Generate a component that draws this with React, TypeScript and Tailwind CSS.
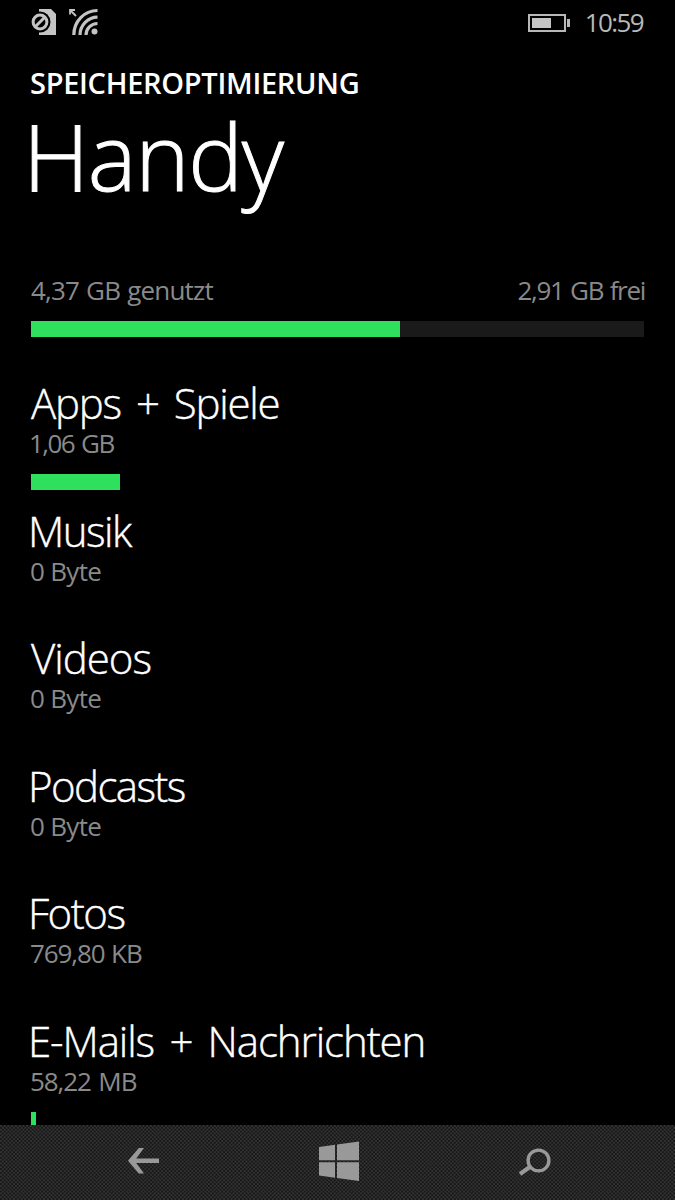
import React from 'react'

const TOTAL_WIDTH = 613

interface StorageItem {
    name: string
    size: string
    bar: number
    nameClass: string
    sizeClass: string
}

const items: StorageItem[] = [
    { name: 'Apps + Spiele', size: '1,06 GB', bar: 89, nameClass: 'tracking-[-1.25px] [word-spacing:5.5px]', sizeClass: '-ml-[2px] tracking-[-1.6px] [word-spacing:2px]' },
    { name: 'Musik', size: '0 Byte', bar: 0, nameClass: '-ml-[3px] tracking-[-1.5px]', sizeClass: '-ml-px tracking-[-0.7px]' },
    { name: 'Videos', size: '0 Byte', bar: 0, nameClass: 'tracking-[-1px]', sizeClass: '-ml-px tracking-[-0.7px]' },
    { name: 'Podcasts', size: '0 Byte', bar: 0, nameClass: '-ml-[3px] tracking-[-1.6px]', sizeClass: '-ml-px tracking-[-0.7px]' },
    { name: 'Fotos', size: '769,80 KB', bar: 0, nameClass: '-ml-[3px] tracking-[-1.5px]', sizeClass: '-ml-px tracking-[-1.1px] [word-spacing:1px]' },
    { name: 'E-Mails + Nachrichten', size: '58,22 MB', bar: 5, nameClass: '-ml-[3px] tracking-[-1.1px] [word-spacing:5.5px]', sizeClass: '-ml-px tracking-[-1.1px] [word-spacing:2px]' },
]

function StatusBar() {
    return (
        <div className="flex h-[46px] items-start justify-between pl-[31px] pr-[32px] text-[#b8b8b8]">
            <div className="flex gap-[12px] pt-[8px]">
                <svg width="26" height="28" viewBox="0 0 26 28">
                    <path d="M8 1h12l5 5v21H8z" fill="#c4c4c4" />
                    <circle cx="9" cy="14" r="10.5" fill="#000" />
                    <circle cx="9" cy="14" r="6.9" fill="none" stroke="#c4c4c4" strokeWidth="3" />
                    <path d="M4.5 18.5l9-9" stroke="#c4c4c4" strokeWidth="3" />
                </svg>
                <svg width="30" height="28" viewBox="0 0 30 28" fill="none" stroke="#c4c4c4">
                    <circle cx="25.5" cy="23.5" r="3" fill="#c4c4c4" stroke="none" />
                    <path d="M4.8 27A23.5 24.5 0 0 1 28.5 2.5" strokeWidth="3.2" />
                    <path d="M11 27A17.5 18 0 0 1 28.5 9.2" strokeWidth="3.2" />
                    <path d="M17 27A11.5 11.5 0 0 1 28.5 15.5" strokeWidth="3.2" />
                    <path d="M1 6.5V2h5M1.5 2.5l5.5 5.5" strokeWidth="1.8" />
                </svg>
            </div>
            <div className="flex">
                <svg className="mt-[13px]" width="43" height="20" viewBox="0 0 43 20">
                    <rect x="1" y="2" width="36" height="16" fill="none" stroke="#b8b8b8" strokeWidth="2" />
                    <rect x="4" y="5" width="19" height="10" fill="#c4c4c4" />
                    <rect x="39" y="6" width="3" height="8" fill="#b8b8b8" />
                </svg>
                <span className="ml-[14px] mt-[8px] text-[26px] font-normal leading-[28px] tracking-[-1.6px]">10:59</span>
            </div>
        </div>
    )
}

function NavBar() {
    return (
        <nav className="flex h-[75px] shrink-0 items-center bg-[#262626] bg-[repeating-conic-gradient(#171717_0_25%,#333333_0_50%)] bg-[length:3.75px_3.75px] pb-[3px] pl-[127px]">
            <svg width="32" height="28" viewBox="0 0 32 28" fill="none">
                <path d="M32 11.5v4.6H9.2l7.8 10.4h-5.2L1 13.8 11.8 1H17L9.2 11.5z" fill="#999" />
            </svg>
            <svg className="ml-[159px]" width="42" height="40" viewBox="0 0 42 40" fill="#999">
                <path d="M1 6l16-2.2v15.4H1zM19 3.5L41 .5v18.7H19zM1 21.3h16v15.4L1 34.5zM19 21.3h22V40l-22-3z" />
            </svg>
            <svg className="ml-[158px] mt-[2px]" width="34" height="28" viewBox="0 0 34 28" fill="none" stroke="#999">
                <circle cx="20.5" cy="12.5" r="10.4" strokeWidth="3.4" />
                <path d="M12.5 18.5L2 26" strokeWidth="4.2" />
            </svg>
        </nav>
    )
}

export default function App() {
    return (
        <div className="flex h-[1200px] w-[675px] flex-col overflow-hidden bg-black font-['Open_Sans',sans-serif] font-light">
            <StatusBar />
            <main className="min-h-0 flex-1 overflow-hidden pl-[31px] pr-[31px] pt-[21px]">
                <h2 className="-ml-px text-[29px] font-semibold leading-[32px] tracking-[-0.3px] text-white">
                    SPEICHEROPTIMIERUNG
                </h2>
                <h1 className="-ml-[8px] mt-[9px] text-[92px] leading-[96px] tracking-[-1.3px] text-white [-webkit-text-stroke:1px_white]">
                    Handy
                </h1>

                {/* Total usage */}
                <div className="-mr-[1px] mt-[72px] flex justify-between whitespace-nowrap text-[26px] font-normal leading-[28px] text-[#8a8a8a]">
                    <span className="tracking-[-0.8px] [word-spacing:1px]">4,37 GB genutzt</span>
                    <span className="tracking-[-1.3px] [word-spacing:1px]">2,91 GB frei</span>
                </div>
                <div className="mt-[16.5px] h-[16px] bg-[#1a1a1a]">
                    <div className="h-full bg-[#2fdf5e]" style={{ width: `${(368.5 / TOTAL_WIDTH) * 100}%` }} />
                </div>

                <ul className="mt-[44.5px]">
                    {items.map((item) => (
                        <li key={item.name} className="h-[127.5px]">
                            <div className={`whitespace-nowrap text-[42px] leading-[44px] text-white [-webkit-text-stroke:0.4px_white] ${item.nameClass}`}>
                                {item.name}
                            </div>
                            <div className={`mt-[4px] text-[26px] font-normal leading-[28px] text-[#8a8a8a] ${item.sizeClass}`}>
                                {item.size}
                            </div>
                            <div className="mt-[17px] h-[16px] bg-[#2fdf5e]" style={{ width: item.bar }} />
                        </li>
                    ))}
                </ul>
            </main>
            <NavBar />
        </div>
    )
}
